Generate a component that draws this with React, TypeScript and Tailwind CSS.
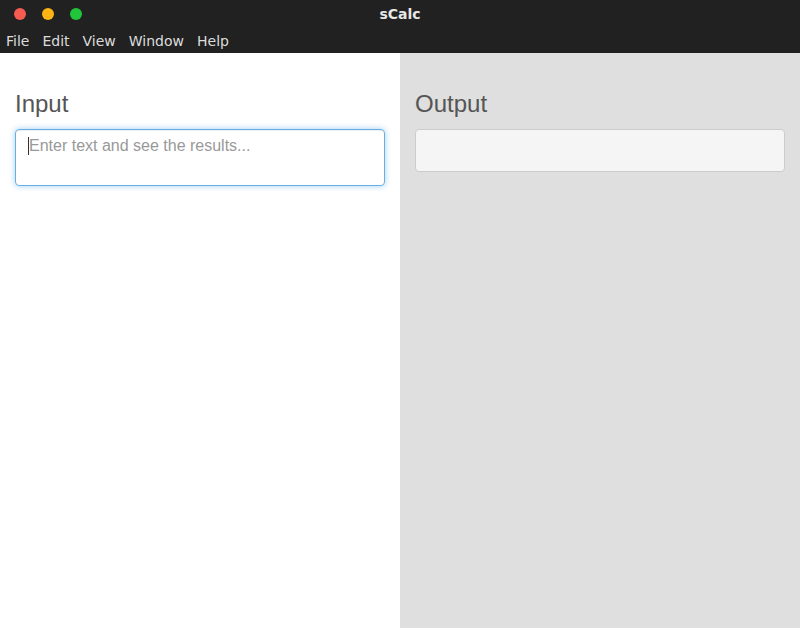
import React from 'react';

const App: React.FC = () => {
    return (
        <div className="w-[800px] h-[628px] flex flex-col overflow-hidden font-['Liberation_Sans',Arial,sans-serif]">
            {/* Title bar */}
            <div className="h-[28px] bg-[#212121] flex items-center relative shrink-0">
                <div className="flex items-center gap-[16px] pl-[14px]">
                    <span className="w-[12px] h-[12px] rounded-full bg-[#f55b51]" />
                    <span className="w-[12px] h-[12px] rounded-full bg-[#fbb414]" />
                    <span className="w-[12px] h-[12px] rounded-full bg-[#20c53a]" />
                </div>
                <div className="absolute inset-0 flex items-center justify-center text-[#e6e6e6] text-[14px] font-bold font-['DejaVu_Sans',sans-serif] pt-[1px]">
                    sCalc
                </div>
            </div>

            {/* Menu bar */}
            <div className="h-[25px] bg-[#212121] flex items-center gap-[13px] pl-[6px] pt-[2px] text-[#dcdcdc] text-[14px] font-['DejaVu_Sans',sans-serif] shrink-0">
                <span>File</span>
                <span>Edit</span>
                <span>View</span>
                <span>Window</span>
                <span>Help</span>
            </div>

            {/* Content */}
            <div className="flex-1 grid grid-cols-2">
                <div className="bg-white px-[15px] pt-[38px]">
                    <h3 className="text-[24px] leading-[26px] text-[#555] mb-[12px]">Input</h3>
                    <div className="h-[57px] rounded-[4px] border border-[#66afe9] shadow-[inset_0_1px_1px_rgba(0,0,0,0.075),0_0_6px_rgba(102,175,233,0.6)] px-[12px] pt-[5px] flex items-start">
                        <span className="w-px h-[18px] bg-[#333] mt-[2px]" />
                        <span className="text-[16px] leading-[22px] text-[#999]">Enter text and see the results...</span>
                    </div>
                </div>
                <div className="bg-[#dfdfdf] px-[15px] pt-[38px]">
                    <h3 className="text-[24px] leading-[26px] text-[#555] mb-[12px]">Output</h3>
                    <div className="h-[43px] rounded-[4px] border border-[#cccccc] bg-[#f5f5f5]" />
                </div>
            </div>
        </div>
    );
};

export default App;
